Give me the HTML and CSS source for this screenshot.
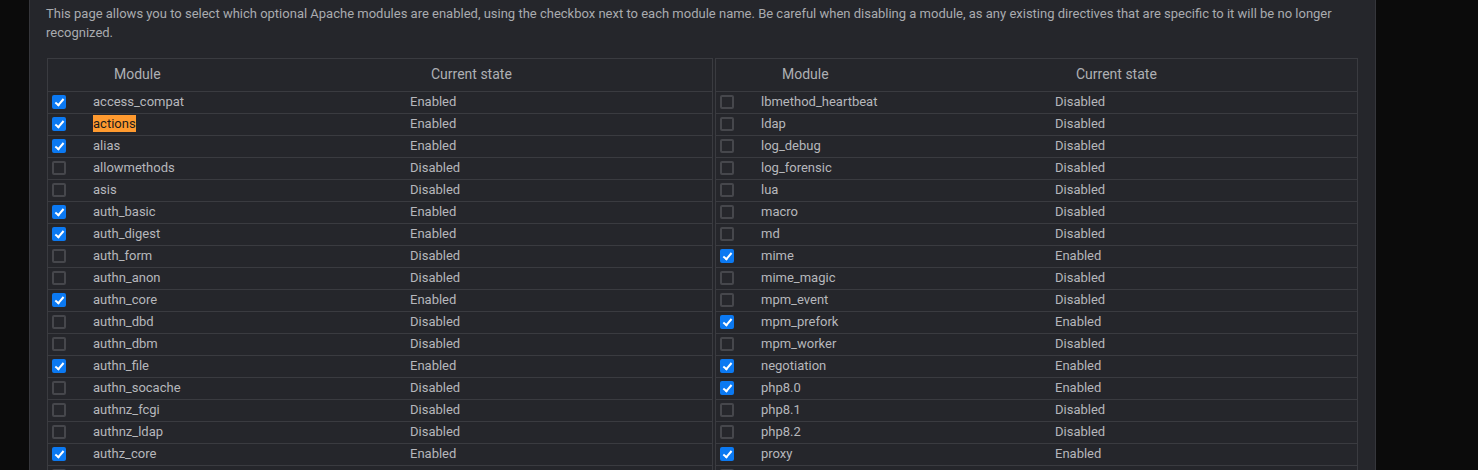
FILE: index.html
```html
<!doctype html>
<html lang="en">
  <head>
    <title>Apache Modules</title>
    <meta charset="utf-8" />
    <link rel="stylesheet" href="styles.css">
  </head>

  <body>
    <div class="panel">
      <p class="intro">
        This page allows you to select which optional Apache modules are enabled, using the checkbox next to each module name. Be careful when disabling a module, as any existing directives that are specific to it will be no longer recognized.
      </p>

      <div class="modules">
        <table class="module-table left" id="left">
          <colgroup>
            <col class="col-check" />
            <col class="col-name" />
            <col class="col-state" />
          </colgroup>
        </table>
        <table class="module-table right" id="right">
          <colgroup>
            <col class="col-check" />
            <col class="col-name" />
            <col class="col-state" />
          </colgroup>
        </table>
      </div>
    </div>

    <script type="module">
      const left = [
        ["access_compat", 1], ["actions", 1], ["alias", 1], ["allowmethods", 0],
        ["asis", 0], ["auth_basic", 1], ["auth_digest", 1], ["auth_form", 0],
        ["authn_anon", 0], ["authn_core", 1], ["authn_dbd", 0], ["authn_dbm", 0],
        ["authn_file", 1], ["authn_socache", 0], ["authnz_fcgi", 0], ["authnz_ldap", 0],
        ["authz_core", 1], ["authz_dbd", 0], ["authz_dbm", 0]
      ]

      const right = [
        ["lbmethod_heartbeat", 0], ["ldap", 0], ["log_debug", 0], ["log_forensic", 0],
        ["lua", 0], ["macro", 0], ["md", 0], ["mime", 1],
        ["mime_magic", 0], ["mpm_event", 0], ["mpm_prefork", 1], ["mpm_worker", 0],
        ["negotiation", 1], ["php8.0", 1], ["php8.1", 0], ["php8.2", 0],
        ["proxy", 1], ["proxy_ajp", 0], ["proxy_balancer", 0]
      ]

      function renderTable(id, modules) {
        const table = document.getElementById(id)

        // Header row
        const head = table.createTHead().insertRow()
        head.innerHTML = `<th></th><th>Module</th><th>Current state</th>`

        const body = table.createTBody()
        modules.forEach(([name, enabled]) => {
          const row = body.insertRow()

          const checkCell = row.insertCell()
          checkCell.className = "check"
          const box = document.createElement("input")
          box.type = "checkbox"
          box.checked = !!enabled
          checkCell.appendChild(box)

          const nameCell = row.insertCell()
          if (name === "actions") {
            nameCell.innerHTML = `<mark>${name}</mark>`
          } else {
            nameCell.textContent = name
          }

          const stateCell = row.insertCell()
          stateCell.textContent = enabled ? "Enabled" : "Disabled"
        })
      }

      renderTable("left", left)
      renderTable("right", right)
    </script>
  </body>
</html>
```

FILE: styles.css
```css
body {
  margin: 0;
  background-color: #0b0b0b;
  font-family: Roboto, "Liberation Sans", sans-serif;
  color: #b6b7bb;
  overflow: hidden;
}

.panel {
  margin-left: 29px;
  width: 1329px;
  padding: 4px 0 20px 16px;
  background-color: #25262b;
  border-left: 1px solid #35363b;
  border-right: 1px solid #35363b;
}

.intro {
  margin: 0 0 16px 0;
  width: 1300px;
  font-size: 13px;
  line-height: 19px;
  color: #a9abaf;
}

.modules {
  display: flex;
  gap: 2px;
  margin-left: 1px;
}

.module-table {
  table-layout: fixed;
  border-collapse: separate;
  border-spacing: 0;
  border: 1px solid #3a3b40;
  font-size: 13px;
}

.module-table.left {
  width: 666px;
}

.module-table.right {
  width: 643px;
}

.col-check {
  width: 40px;
}

.left .col-name {
  width: 317px;
}

.right .col-name {
  width: 294px;
}

.module-table th {
  height: 30px;
  padding: 0 0 2px 26px;
  text-align: left;
  font-weight: normal;
  font-size: 14px;
  color: #aeb0b4;
  border-bottom: 1px solid #3a3b40;
}

.module-table td {
  height: 19px;
  padding: 0 0 2px 5px;
  border-bottom: 1px solid #3a3b40;
  white-space: nowrap;
}

.module-table td.check {
  padding: 0 0 1px 4px;
  line-height: 0;
}

mark {
  background-color: #ff9a2f;
  color: #1b1b1b;
  padding: 1px 0;
}

input[type="checkbox"] {
  appearance: none;
  -webkit-appearance: none;
  position: relative;
  width: 14px;
  height: 14px;
  margin: 0;
  border: 2px solid #46474c;
  border-radius: 2px;
  background-color: #26272c;
  vertical-align: middle;
}

input[type="checkbox"]:checked {
  border-color: #0b79f2;
  background-color: #0b79f2;
}

input[type="checkbox"]:checked::after {
  content: "";
  position: absolute;
  left: 2.5px;
  top: -0.5px;
  width: 3px;
  height: 7px;
  border-right: 2.5px solid #fff;
  border-bottom: 2.5px solid #fff;
  transform: rotate(40deg);
}
```
